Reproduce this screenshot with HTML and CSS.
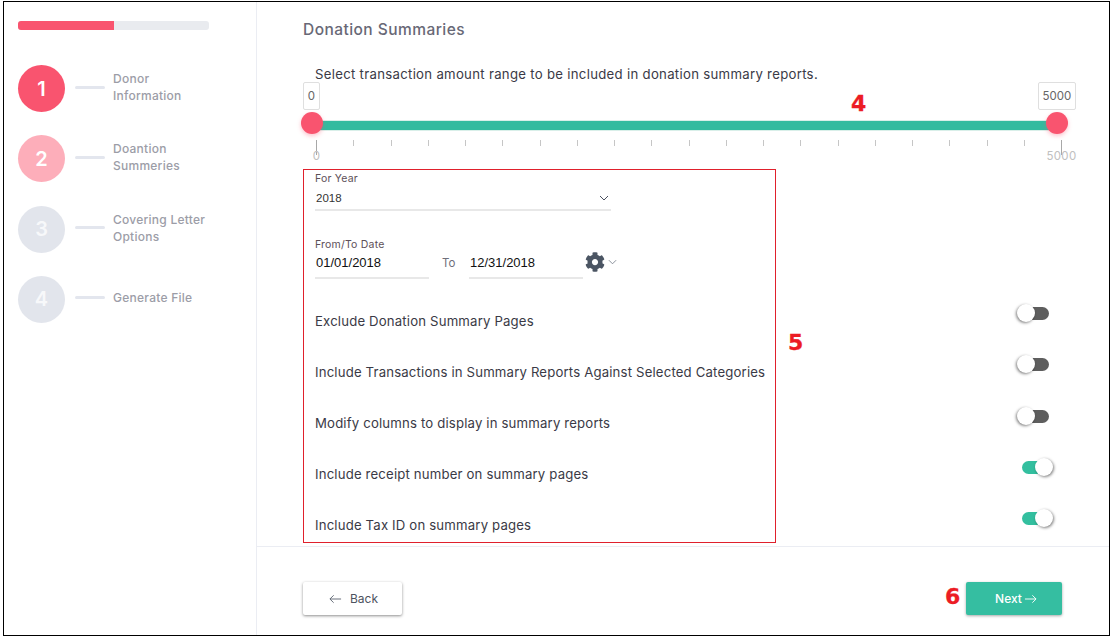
FILE: index.html
```html
<!DOCTYPE html>
<html lang="en">
<head>
<meta charset="utf-8">
<title>Donation Summaries</title>
<link rel="stylesheet" href="styles.css">
</head>
<body>
<div class="frame">
  <aside class="side">
    <div class="progress"><div class="progress-fill"></div></div>
    <ol class="steps">
      <li class="step"><span class="num num-active">1</span><span class="dash"></span><span class="step-label">Donor<br>Information</span></li>
      <li class="step"><span class="num num-next">2</span><span class="dash"></span><span class="step-label">Doantion<br>Summeries</span></li>
      <li class="step"><span class="num">3</span><span class="dash"></span><span class="step-label">Covering Letter<br>Options</span></li>
      <li class="step"><span class="num">4</span><span class="dash"></span><span class="step-label">Generate File</span></li>
    </ol>
  </aside>
  <main class="main">
    <div class="content">
      <h1 class="title">Donation Summaries</h1>
      <p class="lead">Select transaction amount range to be included in donation summary reports.</p>
      <div class="slider">
        <span class="val val-min">0</span>
        <span class="val val-max">5000</span>
        <div class="track"></div>
        <span class="handle handle-min"></span>
        <span class="handle handle-max"></span>
        <div class="ticks">
          <i class="tick tick-end"><b class="tick-label">0</b></i>
          <i class="tick"></i><i class="tick"></i><i class="tick"></i><i class="tick"></i><i class="tick"></i>
          <i class="tick"></i><i class="tick"></i><i class="tick"></i><i class="tick"></i><i class="tick"></i>
          <i class="tick"></i><i class="tick"></i><i class="tick"></i><i class="tick"></i><i class="tick"></i>
          <i class="tick"></i><i class="tick"></i><i class="tick"></i><i class="tick"></i>
          <i class="tick tick-end"><b class="tick-label">5000</b></i>
        </div>
      </div>
      <div class="options">
        <section class="box">
          <label class="field-label">For Year</label>
          <div class="select"><span>2018</span>
            <svg class="chev" viewBox="0 0 10 6" width="10" height="6"><path d="M1 1l4 4 4-4" fill="none" stroke="#4a5160" stroke-width="1"/></svg>
          </div>
          <label class="field-label date-label">From/To Date</label>
          <div class="dates">
            <span class="date">01/01/2018</span>
            <span class="to">To</span>
            <span class="date">12/31/2018</span>
            <svg class="gear" viewBox="0 0 512 512" width="20" height="20"><path fill="#4b5563" d="M487.4 315.7l-42.6-24.6c4.3-23.2 4.3-47 0-70.2l42.6-24.6c4.9-2.8 7.1-8.6 5.5-14-11.1-35.6-30-67.8-54.7-94.6-3.8-4.1-10-5.1-14.8-2.3L380.8 110c-17.9-15.4-38.5-27.3-60.8-35.1V25.8c0-5.6-3.9-10.5-9.4-11.7-36.7-8.2-74.3-7.8-109.2 0-5.5 1.2-9.4 6.1-9.4 11.7V75c-22.2 7.9-42.8 19.8-60.8 35.1L88.7 85.5c-4.9-2.8-11-1.9-14.8 2.3-24.7 26.7-43.6 58.9-54.7 94.6-1.7 5.4.6 11.2 5.5 14L67.3 221c-4.3 23.2-4.3 47 0 70.2l-42.6 24.6c-4.9 2.8-7.1 8.6-5.5 14 11.1 35.6 30 67.8 54.7 94.6 3.8 4.1 10 5.1 14.8 2.3l42.6-24.6c17.9 15.4 38.5 27.3 60.8 35.1v49.2c0 5.6 3.9 10.5 9.4 11.7 36.7 8.2 74.3 7.8 109.2 0 5.5-1.2 9.4-6.1 9.4-11.7v-49.2c22.2-7.9 42.8-19.8 60.8-35.1l42.6 24.6c4.9 2.8 11 1.9 14.8-2.3 24.7-26.7 43.6-58.9 54.7-94.6 1.5-5.5-.7-11.3-5.6-14.1zM256 336c-44.1 0-80-35.9-80-80s35.9-80 80-80 80 35.9 80 80-35.9 80-80 80z"/></svg>
            <svg class="chev chev-gear" viewBox="0 0 10 6" width="9" height="6"><path d="M1 1l4 4 4-4" fill="none" stroke="#7d8490" stroke-width="1"/></svg>
          </div>
          <ul class="rows">
            <li class="row">Exclude Donation Summary Pages</li>
            <li class="row">Include Transactions in Summary Reports Against Selected Categories</li>
            <li class="row">Modify columns to display in summary reports</li>
            <li class="row">Include receipt number on summary pages</li>
            <li class="row">Include Tax ID on summary pages</li>
          </ul>
        </section>
        <div class="toggles">
          <span class="toggle"></span>
          <span class="toggle"></span>
          <span class="toggle"></span>
          <span class="toggle toggle-on"></span>
          <span class="toggle toggle-on"></span>
        </div>
      </div>
    </div>
    <footer class="footer">
      <button class="btn btn-back" type="button">
        <svg viewBox="0 0 14 10" width="13" height="10"><path d="M13 5H1M5 1L1 5l4 4" fill="none" stroke="#5d6470" stroke-width="1"/></svg>
        <span>Back</span>
      </button>
      <button class="btn btn-next" type="button">
        <span>Next</span>
        <svg viewBox="0 0 14 10" width="13" height="10"><path d="M1 5h12M9 1l4 4-4 4" fill="none" stroke="#fff" stroke-width="1"/></svg>
      </button>
    </footer>
    <span class="mark mark-4">4</span>
    <span class="mark mark-5">5</span>
    <span class="mark mark-6">6</span>
  </main>
</div>
</body>
</html>
```
FILE: styles.css
```css
* { box-sizing: border-box; }
html, body { margin: 0; padding: 0; background: #fff; }
body { width: 1111px; height: 637px; overflow: hidden; font-family: "Inter", "Liberation Sans", sans-serif; color: #3f3f4c; padding: 1px 1px 1px 3px; }
.frame { width: 1107px; height: 635px; border: 1px solid #000; display: flex; background: #fff; }
.side { width: 253px; flex: none; border-right: 1px solid #ebedf3; padding: 19px 0 0 14px; }
.progress { width: 191px; height: 9px; border-radius: 3px; background: #e9ebef; overflow: hidden; }
.progress-fill { width: 96px; height: 100%; background: #f9546f; }
.steps { list-style: none; margin: 35px 0 0; padding: 0; display: flex; flex-direction: column; gap: 23.33px; }
.step { display: flex; align-items: center; height: 47px; }
.num { width: 47px; height: 47px; flex: none; border-radius: 50%; background: #e2e5ec; color: #f7f8fa; display: flex; align-items: center; justify-content: center; font-size: 20px; font-weight: 600; }
.num-active { background: #f9546f; color: #fff; }
.num-next { background: #fdaeba; color: #fff; }
.dash { width: 30px; height: 3px; margin: -3px 8px 0 10px; flex: none; border-radius: 2px; background: #e3e6ee; }
.step-label { font-size: 12px; line-height: 17px; font-weight: 500; letter-spacing: .25px; color: #9c9da7; margin-top: -3px; }
.main { position: relative; flex: 1; min-width: 0; display: flex; flex-direction: column; }
.content { height: 545px; padding: 18px 0 0 46px; border-bottom: 1px solid #ebedf3; }
.title { margin: 0; font-size: 15.5px; line-height: 20px; font-weight: 500; letter-spacing: .45px; color: #686876; }
.lead { margin: 27px 0 0 12px; font-size: 13.2px; line-height: 15px; letter-spacing: .29px; color: #3a3a46; }
.slider { position: relative; height: 87px; width: 775px; }
.val { position: absolute; top: 0; height: 28px; border: 1px solid #dfdfdf; border-radius: 2px; background: #fff; font-size: 11.5px; line-height: 26px; text-align: center; color: #666; }
.val-min { left: 0; width: 17px; }
.val-max { left: 735px; width: 38px; }
.track { position: absolute; left: 8px; top: 38px; width: 746px; height: 11px; background: #33bb9f; border: 1px solid #d9efe9; }
.handle { position: absolute; top: 30px; width: 22px; height: 22px; border-radius: 50%; background: #f9546f; box-shadow: 0 2px 4px rgba(249, 84, 111, .35); }
.handle-min { left: -2px; }
.handle-max { left: 743px; }
.ticks { position: absolute; left: 13px; top: 58px; width: 746px; display: flex; justify-content: space-between; }
.tick { position: relative; display: block; width: 1px; height: 6px; background: #c6c6c6; font-style: normal; }
.tick-end { height: 15px; background: #a8a8a8; }
.tick-label { position: absolute; top: 8px; left: 50%; transform: translateX(-50%); font-size: 11.5px; line-height: 16px; font-weight: 400; letter-spacing: .3px; color: #c0c0c0; }
.options { display: flex; align-items: flex-start; }
.box { width: 473px; height: 374px; flex: none; border: 1px solid #e0202c; padding: 2px 0 0 11px; }
.field-label { display: block; font-size: 10.5px; line-height: 14px; letter-spacing: .2px; color: #5d4f58; }
.select { width: 296px; height: 23px; display: flex; justify-content: space-between; align-items: center; padding: 0 2px 1px 1px; border-bottom: 2px solid #e8e8e8; font-family: "Liberation Sans", sans-serif; font-size: 11.5px; color: #333; margin-top: 2px; }
.date-label { margin-top: 27px; }
.dates { display: flex; align-items: flex-start; height: 26px; margin-top: 1px; }
.date { width: 114px; height: 26px; line-height: 20px; border-bottom: 2px solid #e8e8e8; font-family: "Liberation Sans", sans-serif; font-size: 13px; color: #111; padding-left: 1px; }
.to { width: 40px; padding: 3px 0 0 13px; line-height: 14px; font-size: 11.5px; color: #6f6f7a; }
.gear { margin: -1px 0 0 2px; flex: none; }
.chev-gear { margin: 6px 0 0 3px; flex: none; }
.rows { list-style: none; margin: 17px 0 0; padding: 0; }
.row { height: 51px; font-size: 13.2px; line-height: 51px; letter-spacing: .16px; white-space: nowrap; color: #3a3a46; }
.toggles { width: 37px; margin: 135px 0 0 241px; display: flex; flex-direction: column; gap: 31.25px; }
.toggle { position: relative; display: block; width: 32px; height: 20px; align-self: flex-start; }
.toggle::before { content: ""; position: absolute; left: 7px; top: 3px; width: 25px; height: 13px; border-radius: 7px; background: #5e5e5e; }
.toggle::after { content: ""; position: absolute; left: 0; top: 0; width: 18px; height: 18px; border-radius: 50%; background: #fff; box-shadow: -1px 1px 3px rgba(0, 0, 0, .5); }
.toggle-on { align-self: flex-end; }
.toggle-on::before { left: 0; width: 25px; background: #33bf9f; }
.toggle-on::after { left: 13px; box-shadow: 1px 1px 3px rgba(0, 0, 0, .5); }
.footer { flex: 1; display: flex; justify-content: space-between; align-items: flex-start; padding: 35px 47px 0 46px; }
.btn { height: 33px; border: 0; border-radius: 2px; display: inline-flex; align-items: center; justify-content: center; font-family: "Inter", "Liberation Sans", sans-serif; font-size: 12px; cursor: pointer; }
.btn-back { width: 99px; gap: 8px; padding-left: 8px; background: #fff; color: #4d5360; box-shadow: 0 1px 3px rgba(0, 0, 0, .45); }
.btn-next { width: 96px; gap: 2px; padding-left: 10px; background: #35bea1; color: #fff; font-weight: 500; box-shadow: 0 1px 3px rgba(0, 0, 0, .35); }
.mark { position: absolute; font-family: "DejaVu Sans", sans-serif; font-size: 22px; line-height: 20px; font-weight: 700; color: #ec1c24; -webkit-text-stroke: .3px #ec1c24; }
.mark-4 { left: 594px; top: 92px; }
.mark-5 { left: 531px; top: 331px; }
.mark-6 { left: 688px; top: 585px; }
```
